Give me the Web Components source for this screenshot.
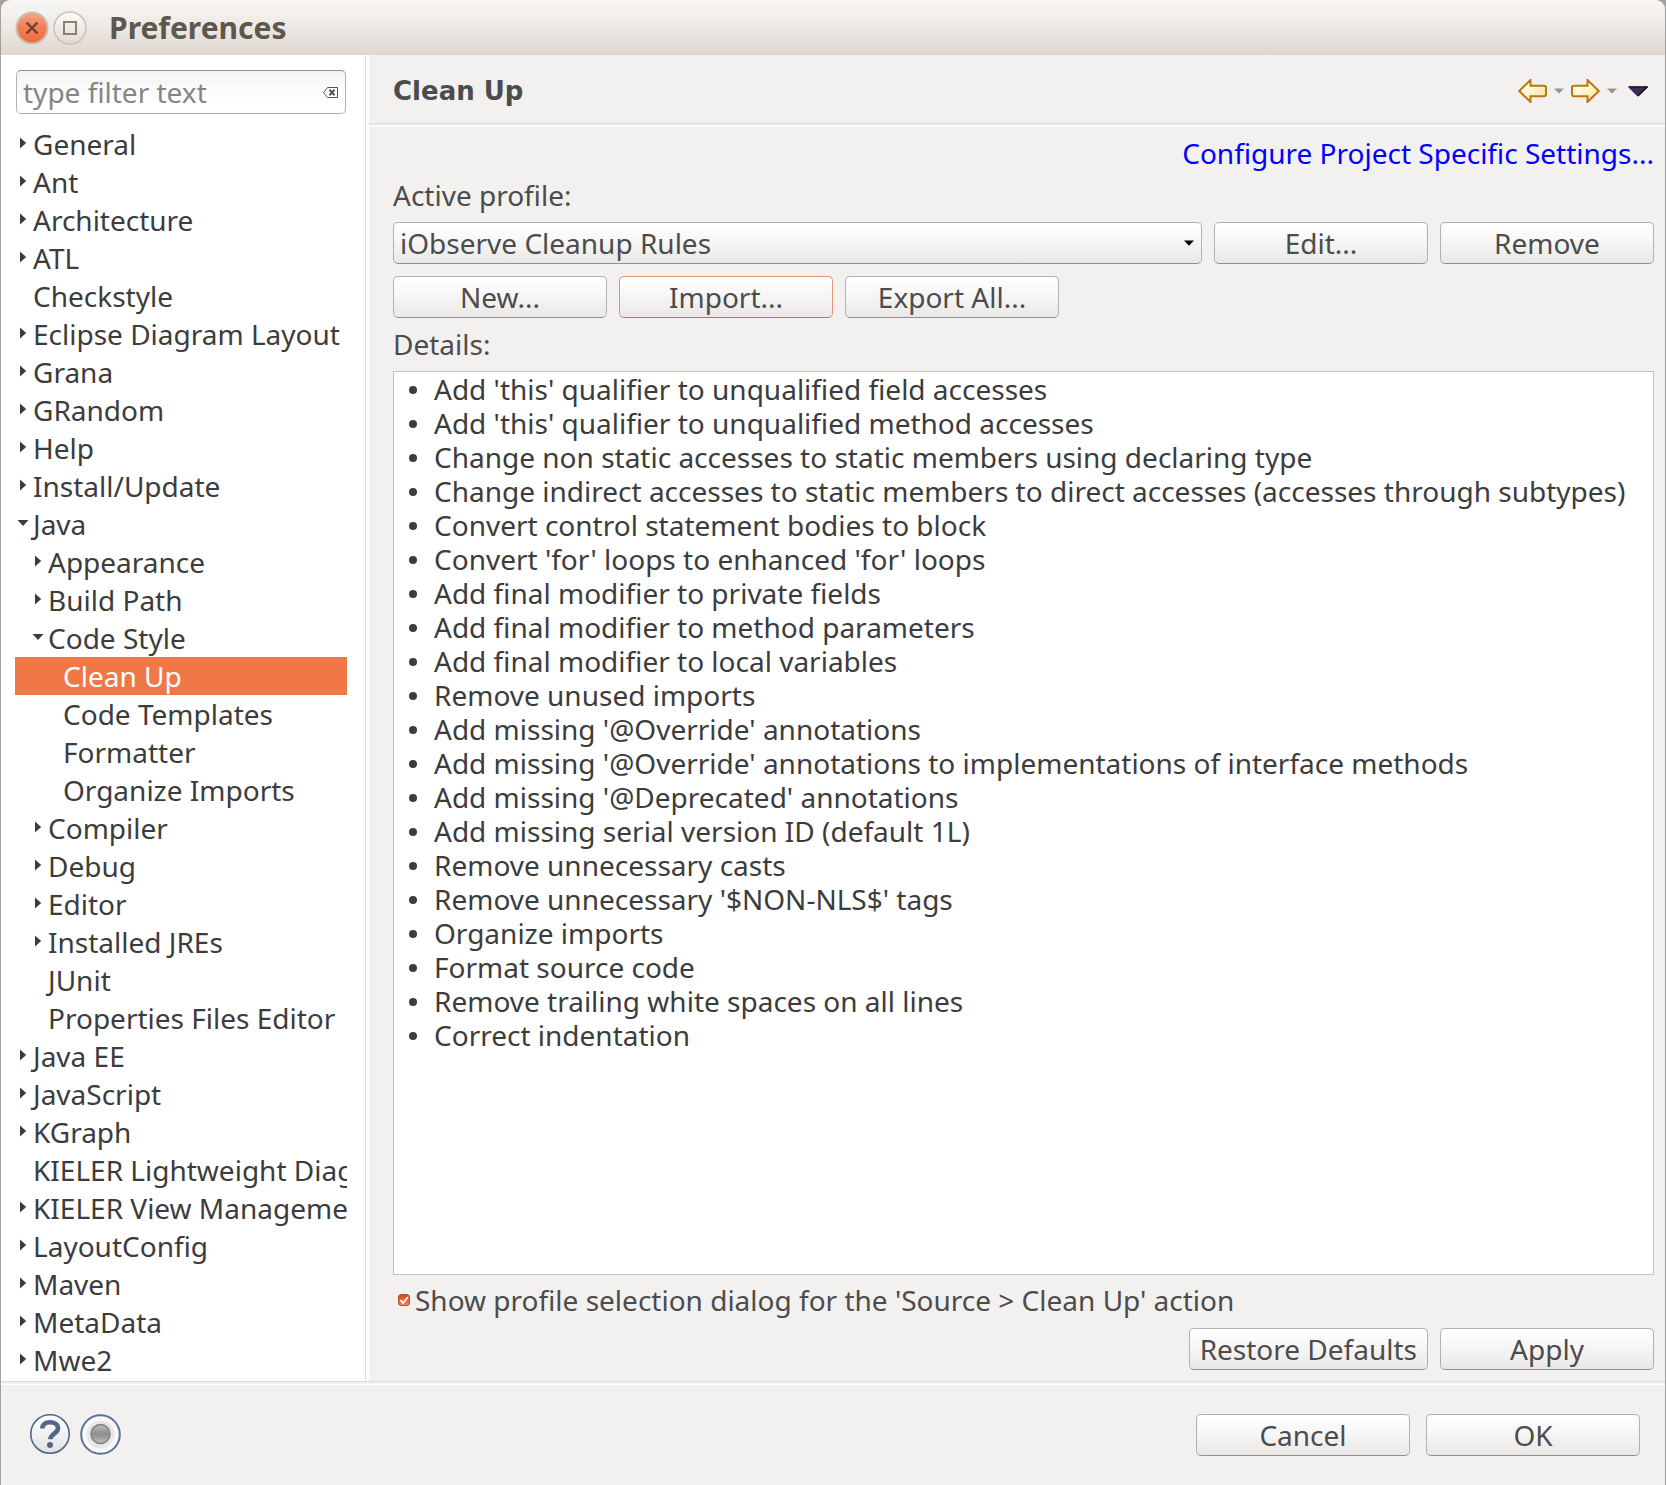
<!DOCTYPE html>
<html lang="en">
<head>
<meta charset="utf-8">
<title>Preferences</title>
<style>
  html { background: #a3a1a0; }
  body {
    margin: 0;
    font-family: "Noto Sans", "Open Sans", sans-serif;
    font-size: 28px;
    line-height: 38px;
    color: #4c4c4c;
    --surface: #f2f1f0;
    --line: #dcdad8;
    --accent: #f07746;
  }
</style>
</head>
<body>
<preferences-dialog></preferences-dialog>

<script>
const define = (name, html, setup) => {
  const template = document.createElement('template');
  template.innerHTML = html;
  customElements.define(name, class extends HTMLElement {
    constructor() {
      super();
      this.attachShadow({ mode: 'open' }).append(template.content.cloneNode(true));
    }
    connectedCallback() { if (setup) setup(this, this.shadowRoot); }
  });
};

define('title-bar', `
  <style>
    :host {
      display: flex; align-items: center; height: 55px; padding: 0 14px; box-sizing: border-box;
      background: linear-gradient(#f8f7f5, #eeeae6 45%, #dfd7cf); border-radius: 9px 9px 0 0;
      color: #5e574d;
    }
    button { border: 0; padding: 0; margin: 0 4px 0 0; background: none; width: 34px; height: 34px; }
    svg { display: block; }
    h1 { margin: 0 0 0 18px; font-size: 30px; line-height: 38px; font-weight: 700; }
  </style>
  <button aria-label="Close"><svg width="34" height="34" viewBox="0 0 34 34">
    <defs><linearGradient id="o" x2="0" y2="1"><stop offset="0" stop-color="#f9a68c"/><stop offset=".5" stop-color="#f37d52"/><stop offset="1" stop-color="#ec6a3a"/></linearGradient></defs>
    <circle cx="17" cy="17" r="15.5" fill="url(#o)" stroke="#cbbfb4" stroke-width="2"/>
    <path d="M11.5 11.5l11 11M22.5 11.5l-11 11" stroke="#6b4034" stroke-width="2.4" fill="none"/></svg></button>
  <button aria-label="Maximize"><svg width="34" height="34" viewBox="0 0 34 34">
    <defs><linearGradient id="w" x2="0" y2="1"><stop offset="0" stop-color="#fdfcfb"/><stop offset="1" stop-color="#dfd9d2"/></linearGradient></defs>
    <circle cx="17" cy="17" r="16" fill="url(#w)" stroke="#cbc2b9" stroke-width="1.6"/>
    <rect x="11" y="11" width="12" height="12" stroke="#8a8175" stroke-width="2" fill="none"/></svg></button>
  <h1><slot></slot></h1>`);

define('push-button', `
  <style>
    :host { display: block; width: 214px; }
    :host([fit]) { width: auto; }
    button {
      display: block; width: 100%; height: 42px; padding: 0 10px; box-sizing: border-box;
      border: 1px solid #b4b2b0; border-bottom-color: #92908e; border-radius: 5px;
      background: linear-gradient(#fff, #f6f5f5 50%, #e9e8e6);
      font: inherit; line-height: 38px; color: #4c4c4c; white-space: nowrap;
    }
    :host([hot]) button { border-color: #de9478; border-bottom-color: #c96e50; }
  </style>
  <button type="button"><slot></slot></button>`);

define('filter-box', `
  <style>
    :host { display: grid; align-items: center; margin: 0 1px; }
    input, svg { grid-area: 1 / 1; }
    input {
      width: 100%; height: 44px; box-sizing: border-box; padding: 0 30px 0 6px; font: inherit; color: #4c4c4c;
      border: 1px solid #b5b3b1; border-top-color: #8f8d8b; border-radius: 5px; outline: 0;
      background: linear-gradient(#f3f3f3, #fff 70%);
    }
    input::placeholder { color: #858585; opacity: 1; }
    svg { justify-self: end; margin-right: 8px; }
  </style>
  <input type="text" placeholder="type filter text" aria-label="type filter text">
  <svg width="15" height="11" viewBox="0 0 15 11" fill="none" stroke="#555"><path d="M4.5.5h10v10h-10l-4-5z"/><path d="M6.5 2.8l5 5.4M11.5 2.8l-5 5.4" stroke-width="2"/></svg>`);

define('tree-item', `
  <style>
    :host { display: flex; align-items: center; height: 38px; padding-left: calc(2px + 15px * var(--level, 0)); white-space: nowrap; color: #3c3c3c; }
    :host([selected]) { background: var(--accent); color: #fff; }
    svg { flex: none; width: 12px; height: 12px; margin: 0 4px 2px 0; fill: #3c3c3c; visibility: hidden; }
    :host([state=closed]) .c, :host([state=open]) .o { visibility: visible; }
    .o { display: none; }
    :host([state=open]) .c { display: none; }
    :host([state=open]) .o { display: block; }
  </style>
  <svg class="c" viewBox="0 0 12 12"><path d="M3 .5L9.200 6 3 11.500z"/></svg>
  <svg class="o" viewBox="0 0 12 12"><path d="M.5 3h11L6 9z"/></svg>
  <span><slot></slot></span>`,
  host => {
    host.style.setProperty('--level', host.getAttribute('level') || 0);
    host.setAttribute('role', 'treeitem');
  });

define('preference-tree', `
  <style>
    :host { display: block; overflow: hidden; }
  </style>
  <div role="tree"></div>`,
  (host, root) => {
    // Each entry: nesting level, then ">" closed, "v" open or "-" leaf, then the page name.
    const entries = `0>General|0>Ant|0>Architecture|0>ATL|0-Checkstyle|0>Eclipse Diagram Layout|0>Grana|0>GRandom|0>Help|0>Install/Update|0vJava|1>Appearance|1>Build Path|1vCode Style|2-Clean Up|2-Code Templates|2-Formatter|2-Organize Imports|1>Compiler|1>Debug|1>Editor|1>Installed JREs|1-JUnit|1-Properties Files Editor|0>Java EE|0>JavaScript|0>KGraph|0-KIELER Lightweight Diagrams|0>KIELER View Management|0>LayoutConfig|0>Maven|0>MetaData|0>Mwe2`.split('|');
    const tree = root.querySelector('[role=tree]');
    for (const e of entries) {
      const item = document.createElement('tree-item');
      item.setAttribute('level', e[0]);
      item.setAttribute('state', { '>': 'closed', v: 'open', '-': 'leaf' }[e[1]]);
      item.textContent = e.slice(2);
      if (item.textContent === 'Clean Up') item.setAttribute('selected', '');
      tree.append(item);
    }
  });

define('history-tools', `
  <style>
    :host { display: flex; align-items: center; }
    button { border: 0; padding: 0; background: none; display: block; }
    svg { display: block; }
    .drop { margin: 0 7px 0 7px; }
    .menu { margin-left: 4px; }
  </style>
  <button aria-label="Back"><svg width="29" height="24" viewBox="0 0 29 24">
    <defs><linearGradient id="g" x2="1" y2="1"><stop offset="0" stop-color="#fff"/><stop offset=".5" stop-color="#fff6cf"/><stop offset="1" stop-color="#fbd98a"/></linearGradient></defs>
    <path d="M1.200 12L12.500 1v5.800H26a2 2 0 0 1 2 2v6.400a2 2 0 0 1-2 2H12.500V23z" fill="url(#g)" stroke="#b9770e" stroke-width="2"/></svg></button>
  <button class="drop" aria-label="Back history"><svg width="10" height="6" viewBox="0 0 10 6"><path d="M0 .5h10L5 5.500z" fill="#969592"/></svg></button>
  <button aria-label="Forward"><svg width="29" height="24" viewBox="0 0 29 24">
    <defs><linearGradient id="g" x2="1" y2="1"><stop offset="0" stop-color="#fff"/><stop offset=".5" stop-color="#fff6cf"/><stop offset="1" stop-color="#fbd98a"/></linearGradient></defs>
    <path d="M27.800 12L16.500 1v5.800H3a2 2 0 0 0-2 2v6.400a2 2 0 0 0 2 2h13.500V23z" fill="url(#g)" stroke="#b9770e" stroke-width="2"/></svg></button>
  <button class="drop" aria-label="Forward history"><svg width="10" height="6" viewBox="0 0 10 6"><path d="M0 .5h10L5 5.500z" fill="#969592"/></svg></button>
  <button class="menu" aria-label="View menu"><svg width="20" height="11" viewBox="0 0 20 11"><path d="M1 .8h18L10 10z" fill="#3d3048"/><path d="M.5.8h19L10 10" fill="none" stroke="#0c0612" stroke-width="1.300"/><path d="M.8.8L10 10" stroke="#4a12a0" stroke-width="1.300"/></svg></button>`);

define('profile-select', `
  <style>
    :host { display: grid; align-items: center; flex: 1; min-width: 0; }
    select, svg { grid-area: 1 / 1; }
    select {
      appearance: none; width: 100%; height: 42px; box-sizing: border-box; padding: 0 24px 0 6px;
      border: 1px solid #b4b2b0; border-bottom-color: #92908e; border-radius: 5px;
      background: linear-gradient(#fff, #f6f5f5 50%, #e9e8e6); font: inherit; color: #4c4c4c;
    }
    svg { justify-self: end; margin-right: 8px; pointer-events: none; }
  </style>
  <select aria-label="Active profile:"><option>iObserve Cleanup Rules</option></select>
  <svg width="10" height="6" viewBox="0 0 10 6"><path d="M0 .5h10L5 5.800z"/></svg>`);

define('details-list', `
  <style>
    :host { display: block; background: #fff; border: 1px solid #c4c2bf; color: #3c3c3c; }
    ul { list-style: none; margin: 0; padding: 0; }
    li { display: flex; align-items: center; line-height: 34px; padding-left: 15px; }
    li::before { content: ""; flex: none; width: 8px; height: 8px; border-radius: 50%; background: #3c3c3c; margin: 2px 17px 0 0; }
  </style>
  <ul></ul>`,
  (host, root) => {
    const rules = [
      "Add 'this' qualifier to unqualified field accesses",
      "Add 'this' qualifier to unqualified method accesses",
      "Change non static accesses to static members using declaring type",
      "Change indirect accesses to static members to direct accesses (accesses through subtypes)",
      "Convert control statement bodies to block",
      "Convert 'for' loops to enhanced 'for' loops",
      "Add final modifier to private fields",
      "Add final modifier to method parameters",
      "Add final modifier to local variables",
      "Remove unused imports",
      "Add missing '@Override' annotations",
      "Add missing '@Override' annotations to implementations of interface methods",
      "Add missing '@Deprecated' annotations",
      "Add missing serial version ID (default 1L)",
      "Remove unnecessary casts",
      "Remove unnecessary '$NON-NLS$' tags",
      "Organize imports",
      "Format source code",
      "Remove trailing white spaces on all lines",
      "Correct indentation"
    ];
    const list = root.querySelector('ul');
    for (const rule of rules) {
      const li = document.createElement('li');
      li.textContent = rule;
      list.append(li);
    }
  });

define('check-option', `
  <style>
    :host { display: block; padding-left: 5px; }
    label { display: flex; align-items: center; gap: 5px; }
    span { display: grid; }
    input, svg { grid-area: 1 / 1; width: 12px; height: 12px; margin: 0; }
    input { appearance: none; box-sizing: border-box; border: 1px solid #b5512f; border-radius: 3px; background: linear-gradient(#d9481c, #e8845f); }
    svg { pointer-events: none; }
  </style>
  <label><span><input type="checkbox" checked><svg viewBox="0 0 12 12"><path d="M2.500 6l2.500 3 5-6" fill="none" stroke="#fff" stroke-width="1.800"/></svg></span><slot></slot></label>`);

define('cleanup-page', `
  <style>
    :host { display: flex; flex-direction: column; min-width: 0; background: var(--surface); }
    header { display: flex; align-items: center; justify-content: space-between; box-sizing: border-box; height: 68px; padding: 4px 17px 0 24px; }
    h2 { margin: 0; font: 700 26px/38px "DejaVu Sans", sans-serif; }
    .rule { height: 2px; border-top: 1px solid var(--line); border-bottom: 1px solid #fff; }
    main { flex: 1; display: flex; flex-direction: column; padding: 7px 11px 11px 24px; }
    a { align-self: flex-end; color: #00f; text-decoration: none; }
    .row { display: flex; gap: 12px; margin-bottom: 12px; }
    .label { margin: 4px 0 8px; }
    .row + .label { margin: -5px 0 8px; }
    details-list { flex: 1; }
    check-option { margin: 6px 0 9px; }
    .end { justify-content: flex-end; margin: 0; }
  </style>
  <header><h2>Clean Up</h2><history-tools></history-tools></header>
  <div class="rule"></div>
  <main>
    <a href="#project">Configure Project Specific Settings...</a>
    <div class="label">Active profile:</div>
    <div class="row"><profile-select></profile-select><push-button>Edit...</push-button><push-button>Remove</push-button></div>
    <div class="row"><push-button>New...</push-button><push-button hot>Import...</push-button><push-button>Export All...</push-button></div>
    <div class="label">Details:</div>
    <details-list></details-list>
    <check-option>Show profile selection dialog for the 'Source &gt; Clean Up' action</check-option>
    <div class="row end"><push-button fit>Restore Defaults</push-button><push-button>Apply</push-button></div>
  </main>`);

define('dialog-footer', `
  <style>
    :host { display: block; background: var(--surface); }
    .rule { height: 2px; border-top: 1px solid var(--line); border-bottom: 1px solid #fff; }
    .bar { display: flex; align-items: center; justify-content: space-between; padding: 29px 25px 29px 29px; }
    .group { display: flex; gap: 16px; }
    .icons { gap: 10px; }
    button { border: 0; padding: 0; background: none; }
    svg { display: block; }
  </style>
  <div class="rule"></div>
  <div class="bar">
    <div class="group icons">
      <button aria-label="Help"><svg width="40" height="42" viewBox="0 0 40 42">
        <defs><linearGradient id="h" x2="0" y2="1"><stop offset="0" stop-color="#fff"/><stop offset="1" stop-color="#e2e2e4"/></linearGradient></defs>
        <circle cx="20" cy="20" r="19.200" fill="url(#h)" stroke="#52658a" stroke-width="1.600"/>
        <path d="M12.300 14.500C12.500 10.500 15.500 8.300 20 8.300c4.700 0 8 2.200 8 6 0 5.200-7.600 5.500-7.600 11" fill="none" stroke="#52658a" stroke-width="4.600"/>
        <circle cx="20" cy="31" r="3" fill="#52658a"/></svg></button>
      <button aria-label="Record preferences"><svg width="41" height="42" viewBox="0 0 41 42">
        <defs><linearGradient id="r" x2="0" y2="1"><stop offset="0" stop-color="#bdbdbd"/><stop offset=".5" stop-color="#8e8e8e"/><stop offset="1" stop-color="#bcbcbc"/></linearGradient></defs>
        <circle cx="20.500" cy="20.500" r="19.300" fill="#f8f8f8" stroke="#5d7193" stroke-width="2"/>
        <circle cx="20.500" cy="20.500" r="14" fill="#e8e8e8"/>
        <circle cx="20.500" cy="20" r="9.500" fill="url(#r)" stroke="#848484" stroke-width="1.600"/></svg></button>
    </div>
    <div class="group"><push-button>Cancel</push-button><push-button>OK</push-button></div>
  </div>`);

define('preferences-dialog', `
  <style>
    :host { display: flex; flex-direction: column; min-height: 100vh; margin: 0 1px; }
    .body { flex: 1; display: grid; grid-template-columns: 368px minmax(0, 1fr); }
    nav { box-sizing: border-box; padding: 15px 18px 2px 14px; background: #fff; min-width: 0;
      display: flex; flex-direction: column; gap: 11px; border-right: 1px solid var(--line); margin-right: 3px; }
    .side { background: #fff; display: grid; }
  </style>
  <title-bar>Preferences</title-bar>
  <div class="body">
    <div class="side"><nav aria-label="Preference pages"><filter-box></filter-box><preference-tree></preference-tree></nav></div>
    <cleanup-page></cleanup-page>
  </div>
  <dialog-footer></dialog-footer>`);
</script>
</body>
</html>
